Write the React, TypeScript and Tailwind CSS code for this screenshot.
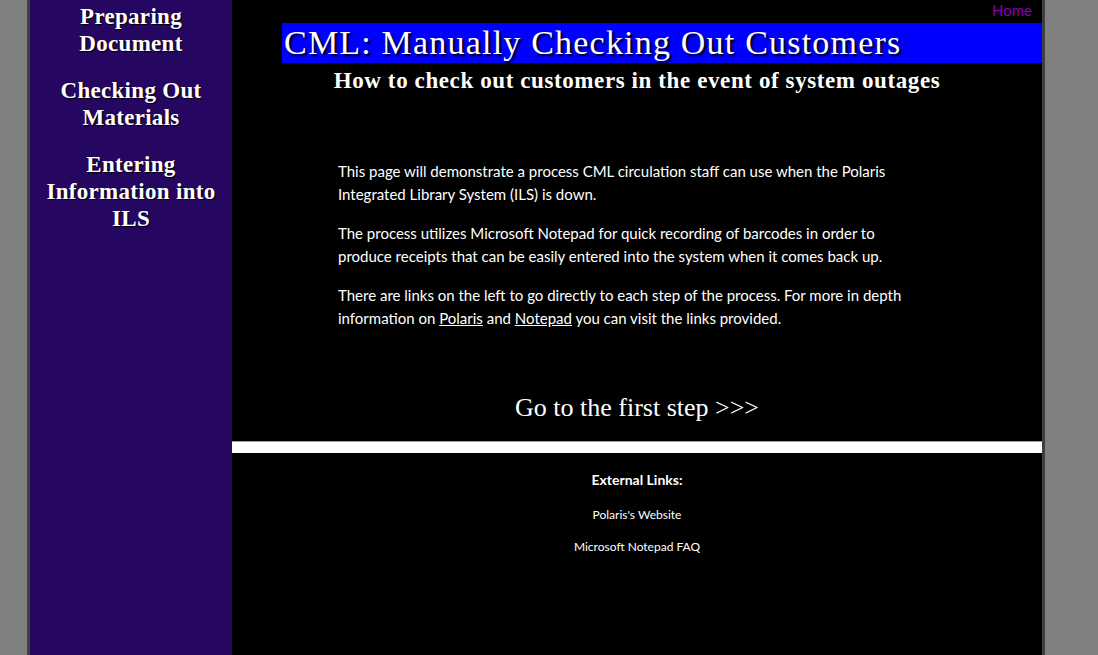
import React from "react";

const navItems = [
  ["Preparing", "Document"],
  ["Checking Out", "Materials"],
  ["Entering", "Information into", "ILS"],
];

const serif = "font-['Liberation_Serif',serif]";
const sans = "font-['Lato','Open_Sans',sans-serif]";

export default function App() {
  return (
    <div className="min-h-[655px] bg-[#808080] flex">
      <div className="ml-[27px] w-[1018px] border-x-[3px] border-[#404040] flex min-h-[655px]">
        <nav className={`w-[202px] shrink-0 bg-[#250661] text-white text-center ${serif} font-bold text-[23px] leading-[27px] tracking-[0.3px] [text-shadow:1px_1px_1px_#000]`}>
          {navItems.map((lines, i) => (
            <a key={i} href="#" className={`block ${i === 0 ? "pt-[3px]" : "pt-[20px]"}`}>
              {lines.map((l) => (
                <span key={l} className="block">
                  {l}
                </span>
              ))}
            </a>
          ))}
        </nav>

        <main className="flex-1 bg-black text-white flex flex-col">
          <div className={`flex justify-end pr-[10px] h-[23px] ${sans} text-[15px] leading-[20px]`}>
            <a href="#" className="text-[#8c00b4]">
              Home
            </a>
          </div>
          <h1 className={`ml-[50px] bg-[#0000ff] h-[40px] pl-[2px] ${serif} text-[34px] leading-[40px] tracking-[1.2px] [text-shadow:2px_2px_2px_#000]`}>
            CML: Manually Checking Out Customers
          </h1>
          <h2 className={`text-center ${serif} font-bold text-[23px] leading-[36px] tracking-[0.6px] [text-shadow:1px_1px_1px_#000]`}>
            How to check out customers in the event of system outages
          </h2>

          <div className={`mt-[61px] ml-[106px] w-[590px] ${sans} text-[15px] leading-[23px] flex flex-col gap-[16px]`}>
            <p>
              This page will demonstrate a process CML circulation staff can use when the Polaris
              Integrated Library System (ILS) is down.
            </p>
            <p>
              The process utilizes Microsoft Notepad for quick recording of barcodes in order to
              produce receipts that can be easily entered into the system when it comes back up.
            </p>
            <p>
              There are links on the left to go directly to each step of the process. For more in depth
              information on{" "}
              <a href="#" className="underline">
                Polaris
              </a>{" "}
              and{" "}
              <a href="#" className="underline">
                Notepad
              </a>{" "}
              you can visit the links provided.
            </p>
          </div>

          <a href="#" className={`mt-[63px] text-center ${serif} text-[26px] leading-[30px]`}>
            Go to the first step &gt;&gt;&gt;
          </a>

          <div className="mt-[18px] h-[12px] bg-white border-t border-[#a0a0a0]" />

          <div className={`text-center ${sans} pt-[18px]`}>
            <p className="font-bold text-[14px] leading-[18px]">External Links:</p>
            <p className="mt-[18px] text-[12px] leading-[16px]">
              <a href="#">Polaris's Website</a>
            </p>
            <p className="mt-[16px] text-[12px] leading-[16px]">
              <a href="#">Microsoft Notepad FAQ</a>
            </p>
          </div>
        </main>
      </div>
    </div>
  );
}
